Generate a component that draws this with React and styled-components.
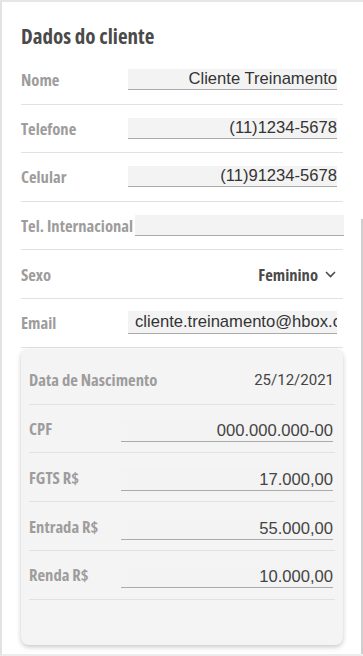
import React from 'react';
import styled, { createGlobalStyle } from 'styled-components';

const GlobalStyle = createGlobalStyle`
  * { box-sizing: border-box; }
  body {
    margin: 0;
    background: #ffffff;
    font-family: "Open Sans", "Liberation Sans", sans-serif;
  }
`;

const Page = styled.div`
  position: relative;
  width: 363px;
  height: 656px;
  overflow: hidden;
  background: #ffffff;
  border-left: 2px solid #e2e2e2;
  border-top: 2px solid #e6e6e6;
  border-bottom: 2px solid #ececec;
  padding: 20px 20px 0 19px;
`;

const ScrollThumb = styled.div`
  position: absolute;
  right: 0;
  top: 217px;
  width: 2px;
  bottom: 0;
  background: #cfcfcf;
`;

const Title = styled.h2`
  margin: 0 0 6px;
  font-size: 21px;
  line-height: 28px;
  font-weight: 700;
  font-stretch: 75%;
  color: #4a4a4a;
`;

const Row = styled.div`
  display: flex;
  align-items: center;
  height: ${p => p.$h || 48.6}px;
  border-bottom: 1px solid #e1e1e1;
  padding-right: ${p => p.$pr ?? 4}px;
  gap: ${p => p.$gap || 0}px;
`;

const Label = styled.span`
  flex-shrink: 0;
  min-width: ${p => p.$w}px;
  font-size: 16.6px;
  font-weight: 700;
  font-stretch: 75%;
  color: #9e9c9c;
  white-space: nowrap;
`;

const Field = styled.div`
  flex-shrink: 0;
  width: ${p => p.$w}px;
  height: ${p => p.$fh || 21}px;
  line-height: ${p => (p.$fh || 21) - 1}px;
  margin-top: ${p => p.$mt || 0}px;
  padding-left: 7px;
  background: ${p => p.$bg || '#f3f3f3'};
  border-bottom: 1px solid #ababab;
  font-family: "Liberation Sans", Arial, sans-serif;
  font-size: 16.6px;
  color: ${p => p.$color || '#333333'};
  text-align: right;
  white-space: nowrap;
  overflow: hidden;
`;

const Select = styled.div`
  margin-left: auto;
  display: flex;
  align-items: center;
  gap: 7px;
  padding-right: 3px;
  font-size: 16.6px;
  font-weight: 700;
  font-stretch: 75%;
  color: #4a4a4a;
`;

const Card = styled.div`
  margin-top: 1px;
  height: 296px;
  background: #f4f4f4;
  border-radius: 8px;
  box-shadow: 0 2px 5px rgba(0, 0, 0, 0.22);
  padding: 7px 8px 0;
`;

const DateText = styled.span`
  margin-left: auto;
  font-family: Roboto, "Liberation Sans", sans-serif;
  font-size: 15px;
  color: #444444;
`;

const clientRows = [
  { label: 'Nome', value: 'Cliente Treinamento' },
  { label: 'Telefone', value: '(11)1234-5678' },
  { label: 'Celular', value: '(11)91234-5678' },
  { label: 'Tel. Internacional', value: '' },
];

const moneyRows = [
  { label: 'CPF', value: '000.000.000-00' },
  { label: 'FGTS R$', value: '17.000,00' },
  { label: 'Entrada R$', value: '55.000,00' },
  { label: 'Renda R$', value: '10.000,00' },
];

const Chevron = () => (
  <svg width="11" height="7" viewBox="0 0 11 7" fill="none">
    <path d="M1 1l4.5 4.5L10 1" stroke="#4a4a4a" strokeWidth="1.6" />
  </svg>
);

const App = () => {
  return (
    <>
      <GlobalStyle />
      <Page>
        <Title>Dados do cliente</Title>
        {clientRows.map(r => (
          <Row key={r.label} $gap={2}>
            <Label $w={105}>{r.label}</Label>
            <Field $w={209}>{r.value}</Field>
          </Row>
        ))}
        <Row $gap={2}>
          <Label $w={105}>Sexo</Label>
          <Select>
            Feminino
            <Chevron />
          </Select>
        </Row>
        <Row $gap={2}>
          <Label $w={105}>Email</Label>
          <Field $w={209} $fh={23}>cliente.treinamento@hbox.com.br</Field>
        </Row>
        <Card>
          <Row $h={49} $pr={1}>
            <Label $w={92}>Data de Nascimento</Label>
            <DateText>25/12/2021</DateText>
          </Row>
          {moneyRows.map(r => (
            <Row key={r.label} $h={48.8} $pr={0}>
              <Label $w={92}>{r.label}</Label>
              <Field $w={212} $bg="#f3f3f3" $color="#444444" $mt={6}>{r.value}</Field>
            </Row>
          ))}
        </Card>
        <ScrollThumb />
      </Page>
    </>
  );
};

export default App;
